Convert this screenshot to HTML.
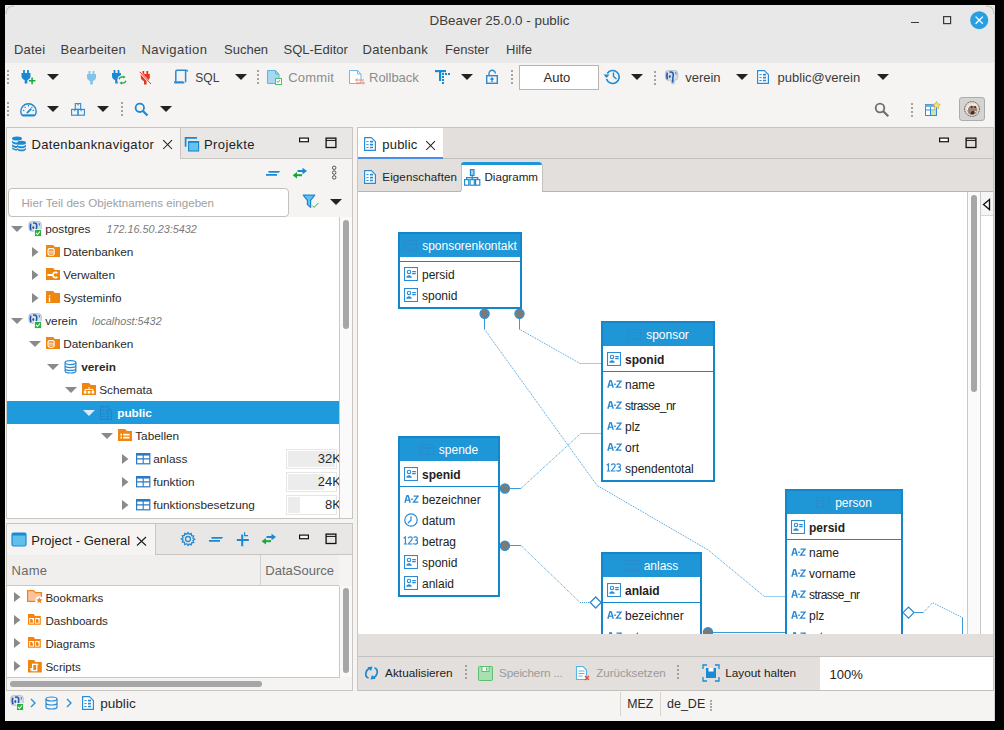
<!DOCTYPE html>
<html><head><meta charset="utf-8"><style>
html,body{margin:0;padding:0;width:1004px;height:730px;overflow:hidden;background:#000;}
body{position:relative;font-family:"Liberation Sans", sans-serif;}
body>div,body>svg,#cv>div,#cv>svg{position:absolute;}
</style></head><body>
<div style="left:0px;top:0px;width:1004px;height:730px;background:#000;"></div>
<div style="left:5px;top:5px;width:990px;height:716px;background:#f5f4f2;"></div>
<div style="left:5px;top:5px;width:990px;height:58px;background:#e8e8e8;"></div>
<svg style="left:5px;top:5px;" width="990" height="20" viewBox="0 0 990 20"><path d="M1 9 Q1 1 9 1" stroke="#bdbdbd" fill="none"/><path d="M981 1 Q989 1 989 9" stroke="#bdbdbd" fill="none"/></svg>
<div style="left:429.5px;top:14.00px;font-size:13.4px;line-height:13.4px;color:#3c3c3c;white-space:nowrap;">DBeaver 25.0.0 - public</div>
<div style="left:911px;top:21.5px;width:8px;height:1.2px;background:#3a3a3a;"></div>
<svg style="left:942px;top:15px;" width="10" height="10" viewBox="0 0 10 10"><rect x="1.6" y="1.6" width="7" height="7" fill="none" stroke="#3a3a3a" stroke-width="1.2"/></svg>
<svg style="left:970px;top:10.5px;" width="19" height="19" viewBox="0 0 19 19"><circle cx="9.2" cy="9.2" r="9" fill="#2a9fe0"/><path d="M5.6 5.6L12.8 12.8M12.8 5.6L5.6 12.8" stroke="#fff" stroke-width="1.3"/></svg>
<div style="left:14px;top:43.00px;font-size:13px;line-height:13px;color:#3c3c3c;white-space:nowrap;letter-spacing:0.2px">Datei</div>
<div style="left:60.5px;top:43.00px;font-size:13px;line-height:13px;color:#3c3c3c;white-space:nowrap;letter-spacing:0.25px">Bearbeiten</div>
<div style="left:141.5px;top:43.00px;font-size:13px;line-height:13px;color:#3c3c3c;white-space:nowrap;letter-spacing:0.45px">Navigation</div>
<div style="left:224px;top:43.00px;font-size:13px;line-height:13px;color:#3c3c3c;white-space:nowrap;letter-spacing:0px">Suchen</div>
<div style="left:283.5px;top:43.00px;font-size:13px;line-height:13px;color:#3c3c3c;white-space:nowrap;letter-spacing:0px">SQL-Editor</div>
<div style="left:362.5px;top:43.00px;font-size:13px;line-height:13px;color:#3c3c3c;white-space:nowrap;letter-spacing:0.3px">Datenbank</div>
<div style="left:445px;top:43.00px;font-size:13px;line-height:13px;color:#3c3c3c;white-space:nowrap;letter-spacing:0px">Fenster</div>
<div style="left:506px;top:43.00px;font-size:13px;line-height:13px;color:#3c3c3c;white-space:nowrap;letter-spacing:0px">Hilfe</div>
<div style="left:994px;top:12px;width:1px;height:709px;background:#d2d2d2;"></div>
<svg style="left:7px;top:70px;" width="2" height="18" viewBox="0 0 2 18"><rect x="0" y="0.0" width="2" height="2" fill="#aaa294"/><rect x="0" y="4.0" width="2" height="2" fill="#aaa294"/><rect x="0" y="8.0" width="2" height="2" fill="#aaa294"/><rect x="0" y="12.0" width="2" height="2" fill="#aaa294"/></svg>
<svg style="left:20.5px;top:70px;" width="18" height="15" viewBox="0 0 18 15"><g transform="translate(0.5,0)"><path d="M1.6 0H3.4V3H5.6V0H7.4V3H9V6.6Q9 8.6 7 9.6L5.8 10.2V13.6H3.2V10.2L2 9.6Q0 8.6 0 6.6V3H1.6Z" fill="#1a88d2"/></g><path d="M7.5 10.8h7M11 7.2v7.2" stroke="#f5f4f2" stroke-width="3"/><path d="M7.8 10.8h6.6M11.1 7.4v6.8" stroke="#18a838" stroke-width="1.5"/></svg>
<svg style="left:47px;top:74px;" width="12" height="6" viewBox="0 0 12 6"><path d="M0 0H12L6.0 6Z" fill="#222"/></svg>
<svg style="left:87px;top:70.5px;" width="10" height="14" viewBox="0 0 10 14"><path d="M1.6 0H3.4V3H5.6V0H7.4V3H9V6.6Q9 8.6 7 9.6L5.8 10.2V13.6H3.2V10.2L2 9.6Q0 8.6 0 6.6V3H1.6Z" fill="#80c4ea"/></svg>
<svg style="left:112px;top:70px;" width="16" height="15" viewBox="0 0 16 15"><path d="M1.6 0H3.4V3H5.6V0H7.4V3H9V6.6Q9 8.6 7 9.6L5.8 10.2V13.6H3.2V10.2L2 9.6Q0 8.6 0 6.6V3H1.6Z" fill="#1a88d2"/><circle cx="10.5" cy="10" r="5.2" fill="#f5f4f2"/><path d="M7 9.2c.6-1.8 2.2-2.6 4.4-2.2M14 10.8c-.6 1.8-2.2 2.6-4.4 2.2" stroke="#18a838" stroke-width="1.3" fill="none"/><path d="M11 5.4l2.6 1.6-2.4 1.6zM10 14.6L7.4 13l2.4-1.6z" fill="#18a838"/></svg>
<svg style="left:138.5px;top:70.5px;" width="13" height="14" viewBox="0 0 13 14"><g transform="translate(1.8,0)"><path d="M1.6 0H3.4V3H5.6V0H7.4V3H9V6.6Q9 8.6 7 9.6L5.8 10.2V13.6H3.2V10.2L2 9.6Q0 8.6 0 6.6V3H1.6Z" fill="#e8341c"/></g><path d="M.6 .8L12 13.2" stroke="#f5f4f2" stroke-width="2.2"/><path d="M.8 .8L12 13" stroke="#e8341c" stroke-width="1"/></svg>
<svg style="left:173px;top:69px;" width="16" height="16" viewBox="0 0 16 16"><path d="M2.8 12.5V2.4Q2.8 1.2 4 1.2H13Q14.6 1.2 14.6 2.6" stroke="#2a8ad4" stroke-width="1.5" fill="none"/><path d="M12.6 1.8V13.2" stroke="#2a8ad4" stroke-width="1.5"/><path d="M1 12.2H10.2L11.6 13.8Q11.8 14.6 11 14.6H2.4Q1 14.6 1 13.2Z" fill="#2a8ad4"/></svg>
<div style="left:195.3px;top:72.00px;font-size:12px;line-height:12px;color:#3c3c3c;white-space:nowrap;">SQL</div>
<svg style="left:234.5px;top:74px;" width="12" height="6" viewBox="0 0 12 6"><path d="M0 0H12L6.0 6Z" fill="#222"/></svg>
<svg style="left:257px;top:70px;" width="2" height="18" viewBox="0 0 2 18"><rect x="0" y="0.0" width="2" height="2" fill="#aaa294"/><rect x="0" y="4.0" width="2" height="2" fill="#aaa294"/><rect x="0" y="8.0" width="2" height="2" fill="#aaa294"/><rect x="0" y="12.0" width="2" height="2" fill="#aaa294"/></svg>
<svg style="left:266px;top:69px;" width="17" height="16" viewBox="0 0 17 16"><path d="M1.5 1.5h8l3.5 3.5v9.5H1.5z" fill="#a8d8f0" stroke="#5ab4e4"/><path d="M9.5 1.5v3.5h3.5" fill="none" stroke="#5ab4e4"/><rect x="9.5" y="9.5" width="6" height="6" fill="#fff" stroke="#4cc070"/><path d="M11 12l1 1.5 2-2.5" stroke="#4cc070" fill="none"/></svg>
<div style="left:288.3px;top:71.00px;font-size:13px;line-height:13px;color:#8c8c8c;white-space:nowrap;letter-spacing:0.15px">Commit</div>
<svg style="left:348px;top:69px;" width="17" height="16" viewBox="0 0 17 16"><path d="M1.5 1.5h8l3.5 3.5v9.5H1.5z" fill="#fff" stroke="#6abce8"/><path d="M9.5 1.5v3.5h3.5" fill="none" stroke="#6abce8"/><path d="M8 11h8M8 14h8" stroke="#f08070" stroke-width="1.2"/><path d="M9 9.5l-1.5 1.5 1.5 1.5M15 12.5l1.5 1.5-1.5 1.5" stroke="#f08070" fill="none"/></svg>
<div style="left:369px;top:71.00px;font-size:13px;line-height:13px;color:#8c8c8c;white-space:nowrap;">Rollback</div>
<svg style="left:434px;top:69px;" width="18" height="17" viewBox="0 0 18 17"><rect x="1" y="1" width="11" height="2.2" fill="#1a8ad4"/><rect x="5" y="1" width="2.2" height="11" fill="#1a8ad4"/><g fill="#1a8ad4"><rect x="8" y="4" width="2" height="2"/><rect x="11" y="4" width="2" height="2"/><rect x="14" y="4" width="2" height="2"/><rect x="8" y="7" width="2" height="2"/><rect x="8" y="10" width="2" height="2"/><rect x="8" y="13" width="2" height="2"/></g></svg>
<svg style="left:461px;top:74px;" width="12" height="6" viewBox="0 0 12 6"><path d="M0 0H12L6.0 6Z" fill="#222"/></svg>
<svg style="left:485px;top:69px;" width="14" height="16" viewBox="0 0 14 16"><path d="M4 6V4.5a3.2 3.2 0 0 1 6.4 0" stroke="#2a8ad4" stroke-width="1.4" fill="none"/><rect x="1.7" y="6.7" width="10.6" height="7.6" fill="none" stroke="#2a8ad4" stroke-width="1.4"/><path d="M7 13V9M5.5 10.5L7 9l1.5 1.5" stroke="#2a8ad4" stroke-width="1.3" fill="none"/></svg>
<svg style="left:511px;top:70px;" width="2" height="18" viewBox="0 0 2 18"><rect x="0" y="0.0" width="2" height="2" fill="#aaa294"/><rect x="0" y="4.0" width="2" height="2" fill="#aaa294"/><rect x="0" y="8.0" width="2" height="2" fill="#aaa294"/><rect x="0" y="12.0" width="2" height="2" fill="#aaa294"/></svg>
<div style="left:519px;top:65px;width:80px;height:25px;background:#fff;box-sizing:border-box;border:1px solid #b8b4b0;"></div>
<div style="left:543.5px;top:71.00px;font-size:13px;line-height:13px;color:#2a2a2a;white-space:nowrap;">Auto</div>
<svg style="left:603px;top:68px;" width="18" height="17" viewBox="0 0 18 17"><path d="M4.2 5.5A6.5 6.5 0 1 1 3.5 11" stroke="#1a8ad4" stroke-width="1.6" fill="none"/><path d="M0.5 6.5h6l-3 3.5z" fill="#1a8ad4"/><path d="M10.5 4.5v4l3 2.5" stroke="#1a8ad4" stroke-width="1.4" fill="none"/></svg>
<svg style="left:631px;top:74px;" width="12" height="6" viewBox="0 0 12 6"><path d="M0 0H12L6.0 6Z" fill="#222"/></svg>
<svg style="left:654px;top:71px;" width="2" height="18" viewBox="0 0 2 18"><rect x="0" y="0.0" width="2" height="2" fill="#aaa294"/><rect x="0" y="4.0" width="2" height="2" fill="#aaa294"/><rect x="0" y="8.0" width="2" height="2" fill="#aaa294"/><rect x="0" y="12.0" width="2" height="2" fill="#aaa294"/></svg>
<svg style="left:664px;top:70px;" width="15" height="15" viewBox="0 0 15 15"><path d="M1.4 3.2Q1.2 .6 4 .6H11Q13.8 .6 13.8 3.4V7.4Q13.8 9.8 11.6 10H10.4V12.6Q10.4 14 9 14Q7.4 14 7.4 12.6V10.2H3.6Q1.6 10 1.4 7.6Z" fill="#d6dee8" stroke="#aab2bc" stroke-width=".7"/><path d="M3.2 2.6Q2.4 5.8 3.4 9.2" stroke="#1c50a8" stroke-width="1.6" fill="none"/><ellipse cx="5.8" cy="6.6" rx=".9" ry="1.3" fill="#1c46a0"/><path d="M5.6 2.2Q8.6 1.4 9.2 3.8Q9.4 6 8.8 8.4L8.6 12.6" stroke="#1c5ab0" stroke-width="1.5" fill="none"/><path d="M11.2 2.2Q12.6 3 11.8 4.6" stroke="#3a8ac8" stroke-width="1.1" fill="none"/></svg>
<div style="left:685.2px;top:71.00px;font-size:13px;line-height:13px;color:#3c3c3c;white-space:nowrap;">verein</div>
<svg style="left:736.3px;top:74px;" width="12" height="6" viewBox="0 0 12 6"><path d="M0 0H12L6.0 6Z" fill="#222"/></svg>
<svg style="left:755.5px;top:69px;" width="14" height="16" viewBox="0 0 14 16"><path d="M1.6 1.6H8.4L12.4 5.6V14.4H1.6Z" fill="#fff" stroke="#2a8ad4" stroke-width="1.2" stroke-linejoin="round"/><path d="M3.4 5.6h2.2M3.4 8.6h2.2M3.4 11.5h2.2" stroke="#2a8ad4" stroke-width="1"/><path d="M7 5.6h3.1M7 8.6h3.1M7 11.5h3.1" stroke="#2a8ad4" stroke-width="1.7"/></svg>
<div style="left:777.6px;top:71.00px;font-size:13px;line-height:13px;color:#3c3c3c;white-space:nowrap;">public@verein</div>
<svg style="left:877.3px;top:74px;" width="12" height="6" viewBox="0 0 12 6"><path d="M0 0H12L6.0 6Z" fill="#222"/></svg>
<svg style="left:7px;top:102px;" width="2" height="18" viewBox="0 0 2 18"><rect x="0" y="0.0" width="2" height="2" fill="#aaa294"/><rect x="0" y="4.0" width="2" height="2" fill="#aaa294"/><rect x="0" y="8.0" width="2" height="2" fill="#aaa294"/><rect x="0" y="12.0" width="2" height="2" fill="#aaa294"/></svg>
<svg style="left:19.5px;top:102.5px;" width="17" height="14" viewBox="0 0 17 14"><path d="M2.2 12.2Q.8 10.8 .8 8.4A7.7 7.7 0 0 1 16.2 8.4Q16.2 10.8 14.8 12.2Z" fill="none" stroke="#1a88d2" stroke-width="1.4" stroke-linejoin="round"/><path d="M2.6 12.6H14.4" stroke="#1a88d2" stroke-width="1.8"/><path d="M8.5 1.8V3.4M3 7.2L4.4 7.6M14 7.2L12.6 7.6M4.6 3.8l1 1M12.4 3.8l-1 1" stroke="#1a88d2" stroke-width="1.1"/><path d="M7.4 9.6L10.8 6.2" stroke="#1a88d2" stroke-width="1.8" stroke-linecap="round"/></svg>
<svg style="left:47px;top:105.5px;" width="12" height="6" viewBox="0 0 12 6"><path d="M0 0H12L6.0 6Z" fill="#222"/></svg>
<svg style="left:70.5px;top:102.5px;" width="14" height="13" viewBox="0 0 14 13"><g fill="none" stroke="#2a8ad4" stroke-width="1.1"><rect x="4.3" y=".6" width="5.4" height="5.8"/><rect x=".6" y="6.4" width="6.4" height="5.8"/><rect x="7" y="6.4" width="6.4" height="5.8"/></g><path d="M7 .6V2.6M3.8 6.4V8.2M10.2 6.4V8.2" stroke="#2a8ad4" stroke-width="1.1"/></svg>
<svg style="left:97px;top:105.5px;" width="12" height="6" viewBox="0 0 12 6"><path d="M0 0H12L6.0 6Z" fill="#222"/></svg>
<svg style="left:120.5px;top:102px;" width="2" height="18" viewBox="0 0 2 18"><rect x="0" y="0.0" width="2" height="2" fill="#aaa294"/><rect x="0" y="4.0" width="2" height="2" fill="#aaa294"/><rect x="0" y="8.0" width="2" height="2" fill="#aaa294"/><rect x="0" y="12.0" width="2" height="2" fill="#aaa294"/></svg>
<svg style="left:134px;top:102px;" width="15" height="15" viewBox="0 0 15 15"><circle cx="5.8" cy="5.8" r="4.2" fill="none" stroke="#1a8ad4" stroke-width="1.8"/><path d="M9 9l4.5 4.5" stroke="#1a8ad4" stroke-width="2.2"/></svg>
<svg style="left:160px;top:105.5px;" width="12" height="6" viewBox="0 0 12 6"><path d="M0 0H12L6.0 6Z" fill="#222"/></svg>
<svg style="left:874px;top:102px;" width="16" height="16" viewBox="0 0 16 16"><circle cx="6" cy="6" r="4.3" fill="none" stroke="#6e6e6e" stroke-width="1.8"/><path d="M9.3 9.3l5 5" stroke="#6e6e6e" stroke-width="2.2"/></svg>
<svg style="left:911px;top:103px;" width="2" height="18" viewBox="0 0 2 18"><rect x="0" y="0.0" width="2" height="2" fill="#aaa294"/><rect x="0" y="4.0" width="2" height="2" fill="#aaa294"/><rect x="0" y="8.0" width="2" height="2" fill="#aaa294"/><rect x="0" y="12.0" width="2" height="2" fill="#aaa294"/></svg>
<svg style="left:924px;top:101px;" width="17" height="16" viewBox="0 0 17 16"><rect x="1.5" y="3.5" width="11" height="11" fill="#fff" stroke="#3a8ad0"/><rect x="1.5" y="3.5" width="11" height="2.5" fill="#6ab0e0"/><path d="M1.5 9h11M6.5 6v8.5" stroke="#3a8ad0"/><rect x="7" y="9.5" width="5" height="4.5" fill="#c8e6b0"/><path d="M12.5 0.5l1.2 2.5 2.6.3-2 1.8.6 2.6-2.4-1.4-2.4 1.4.6-2.6-2-1.8 2.6-.3z" fill="#f8e08a" stroke="#c89a20" stroke-width=".6"/></svg>
<div style="left:959px;top:97px;width:26px;height:23.5px;background:#d4d4d4;box-sizing:border-box;border:1px solid #acacac;border-radius:3px;"></div>
<svg style="left:963px;top:100px;" width="18" height="18" viewBox="0 0 18 18"><circle cx="9" cy="9" r="7.4" fill="#e6dccf" stroke="#4e3e34" stroke-width=".9" stroke-dasharray="1.2 .6"/><path d="M4.5 10.5C4.8 7 6.5 5.6 9.5 5.4c2.6-.2 4.6 1.4 4.8 4.2.2 2.6-1.6 5.2-4.8 5.4-2.8.2-4.8-1.6-5-4.5z" fill="#9c8272"/><path d="M7.5 13.5c.5-1.6 1.6-2.6 3-2.8l1 2.6c-1 1-2.6 1.4-4 .2z" fill="#3e2c22"/><path d="M4.2 10c.4-2.6 1.6-4.4 3.6-5.2" stroke="#fff" stroke-width="1" fill="none"/><path d="M8.6 5.2c1.6-.6 3.2-.6 4.6 0" stroke="#fff" stroke-width=".9" fill="none"/><circle cx="8.6" cy="6.9" r=".9" fill="#2a1e18"/><circle cx="12.2" cy="7.1" r=".9" fill="#2a1e18"/><circle cx="12.8" cy="11.6" r=".7" fill="#fff"/></svg>
<div style="left:6px;top:127px;width:347px;height:392px;background:#f5f4f2;"></div>
<div style="left:6px;top:127px;width:347px;height:1px;background:#c9c5c1;"></div>
<div style="left:6px;top:127px;width:1px;height:392px;background:#c9c5c1;"></div>
<div style="left:352px;top:127px;width:1px;height:392px;background:#c9c5c1;"></div>
<div style="left:6px;top:518px;width:347px;height:1px;background:#c9c5c1;"></div>
<div style="left:180px;top:128px;width:172px;height:30px;background:#e8e7e5;"></div>
<div style="left:180px;top:158px;width:172px;height:1px;background:#c9c5c1;"></div>
<div style="left:180px;top:128px;width:1px;height:30px;background:#c9c5c1;"></div>
<svg style="left:11px;top:136px;" width="16" height="16" viewBox="0 0 16 16"><g fill="#1a8ad4"><ellipse cx="6" cy="2.5" rx="5" ry="2"/><path d="M1 4.5c1 1.5 3 2 5 2s2.5 0 3-.5v2c-.5.5-1.5.5-3 .5-2 0-4-.5-5-2zM1 8c1 1.5 3 2 5 2v2c-2 0-4-.5-5-2zM1 11c1 1.5 3 2 5 2v1.5c-2 0-4-.5-5-2z"/><ellipse cx="10.5" cy="6.8" rx="4.5" ry="2"/><path d="M6 8.5c1 1.3 2.5 1.8 4.5 1.8s3.5-.5 4.5-1.8v2c-1 1.3-2.5 1.8-4.5 1.8S7 11.8 6 10.5zM6 11.8c1 1.3 2.5 1.8 4.5 1.8s3.5-.5 4.5-1.8v1.7c-1 1.3-2.5 1.8-4.5 1.8S7 14.8 6 13.5z"/></g></svg>
<div style="left:31.5px;top:138.00px;font-size:13px;line-height:13px;color:#222;white-space:nowrap;letter-spacing:0.35px">Datenbanknavigator</div>
<svg style="left:162px;top:139px;" width="12" height="11" viewBox="0 0 12 11"><path d="M1.2 1.2L10 10M10 1.2L1.2 10" stroke="#1a1a1a" stroke-width="1.05"/></svg>
<svg style="left:184px;top:136px;" width="16" height="16" viewBox="0 0 16 16"><path d="M1.6 10.8V1.8H13" stroke="#1a88d2" stroke-width="1.7" fill="none"/><rect x="4.6" y="5.6" width="10" height="9.4" fill="#62c4ec" stroke="#1a88d2" stroke-width="1.1"/><path d="M4.1 5.9H15.1" stroke="#1a88d2" stroke-width="1.8"/></svg>
<div style="left:204px;top:138.00px;font-size:13px;line-height:13px;color:#222;white-space:nowrap;letter-spacing:0.4px">Projekte</div>
<svg style="left:298px;top:137px;" width="12" height="6" viewBox="0 0 12 6"><rect x="1.6" y="1.1" width="8.8" height="3.6" fill="#fff" stroke="#111" stroke-width="1.2"/></svg>
<svg style="left:325px;top:137px;" width="12" height="12" viewBox="0 0 12 12"><rect x="1.1" y="1.1" width="9.8" height="9.4" fill="none" stroke="#111" stroke-width="1.3"/><path d="M1 3.4h10" stroke="#111" stroke-width="1"/></svg>
<svg style="left:265px;top:169px;" width="15" height="8" viewBox="0 0 15 8"><path d="M3.5 2.8H13.2Q14 2.8 14 2M1 5.8H12" stroke="#1a88d2" stroke-width="1.8" fill="none"/></svg>
<svg style="left:291.5px;top:166.5px;" width="16" height="12" viewBox="0 0 16 12"><path d="M5.5 4H11" stroke="#1a88d2" stroke-width="2"/><path d="M10.5 .8L15 4L10.5 7.2Z" fill="#1a88d2"/><path d="M10 8.2H4.5" stroke="#18a838" stroke-width="2"/><path d="M5 5L.6 8.2L5 11.4Z" fill="#18a838"/></svg>
<svg style="left:330px;top:165px;" width="8" height="16" viewBox="0 0 8 16"><g fill="none" stroke="#4a4a4a" stroke-width=".95"><circle cx="4.2" cy="2.8" r="1.75"/><circle cx="4.2" cy="7.6" r="1.75"/><circle cx="4.2" cy="12.4" r="1.75"/></g></svg>
<div style="left:7.5px;top:188px;width:281px;height:28.5px;background:#fff;box-sizing:border-box;border:1px solid #c4c0bc;border-radius:4px;"></div>
<div style="left:21.5px;top:197.00px;font-size:11.6px;line-height:11.6px;color:#a0a0a0;white-space:nowrap;">Hier Teil des Objektnamens eingeben</div>
<svg style="left:302px;top:194px;" width="18" height="15" viewBox="0 0 18 15"><path d="M1.2 1.2H12.8L8.6 6.4V13.4L5.4 10.6V6.4Z" fill="#62c0f0" stroke="#1a88d2" stroke-width="1.2" stroke-linejoin="round"/><path d="M10.4 11.6l1.8 1.8 4.2-4.4" stroke="#2ab040" stroke-width="1" fill="none"/></svg>
<svg style="left:330.3px;top:198.6px;" width="12" height="6" viewBox="0 0 12 6"><path d="M0 0H12L6.0 6Z" fill="#222"/></svg>
<div style="left:7px;top:217px;width:332px;height:301px;background:#fff;"></div>
<svg style="left:11px;top:226px;" width="12" height="6" viewBox="0 0 12 6"><path d="M0 0H12L6 6Z" fill="#8a8a8a"/></svg>
<svg style="left:27px;top:221px;" width="16" height="16" viewBox="0 0 16 16"><g transform="translate(0.5,0)"><path d="M1.4 3.2Q1.2 .6 4 .6H11Q13.8 .6 13.8 3.4V7.4Q13.8 9.8 11.6 10H10.4V12.6Q10.4 14 9 14Q7.4 14 7.4 12.6V10.2H3.6Q1.6 10 1.4 7.6Z" fill="#d6dee8" stroke="#aab2bc" stroke-width=".7"/><path d="M3.2 2.6Q2.4 5.8 3.4 9.2" stroke="#1c50a8" stroke-width="1.6" fill="none"/><ellipse cx="5.8" cy="6.6" rx=".9" ry="1.3" fill="#1c46a0"/><path d="M5.6 2.2Q8.6 1.4 9.2 3.8Q9.4 6 8.8 8.4L8.6 12.6" stroke="#1c5ab0" stroke-width="1.5" fill="none"/><path d="M11.2 2.2Q12.6 3 11.8 4.6" stroke="#3a8ac8" stroke-width="1.1" fill="none"/></g><rect x="7.5" y="8.5" width="7" height="7" fill="#2ab040" stroke="#fff" stroke-width=".8"/><path d="M9 12l1.5 1.5 2.5-3" stroke="#fff" stroke-width="1.1" fill="none"/></svg>
<div style="left:45.2px;top:224.00px;font-size:11.8px;line-height:11.8px;color:#2a2a2a;white-space:nowrap;">postgres</div>
<div style="left:106.6px;top:224.00px;font-size:10.8px;line-height:10.8px;color:#7a7a7a;white-space:nowrap;font-style:italic;">172.16.50.23:5432</div>
<svg style="left:32px;top:247px;" width="7" height="10" viewBox="0 0 7 10"><path d="M0 0L6.5 5L0 10Z" fill="#8a8a8a"/></svg>
<svg style="left:45.8px;top:245px;" width="14" height="12" viewBox="0 0 14 12"><path d="M0 0H7L9 2H14V12H0Z" fill="#ee8612"/><rect x="2" y="3.6" width="6.2" height="6.6" rx="1.6" fill="none" stroke="#fff" stroke-width="1.1"/><path d="M2.5 6.2h5.2M2.5 8h5.2" stroke="#fff" stroke-width=".9"/></svg>
<div style="left:63.2px;top:247.00px;font-size:11.8px;line-height:11.8px;color:#2a2a2a;white-space:nowrap;">Datenbanken</div>
<svg style="left:32px;top:270px;" width="7" height="10" viewBox="0 0 7 10"><path d="M0 0L6.5 5L0 10Z" fill="#8a8a8a"/></svg>
<svg style="left:45.8px;top:268px;" width="14" height="12" viewBox="0 0 14 12"><path d="M0 0H7L9 2H14V12H0Z" fill="#ee8612"/><path d="M1.5 7H7.5" stroke="#fff" stroke-width="2"/><path d="M11.3 5.2A2.6 2.6 0 1 0 11.3 8.8" stroke="#fff" stroke-width="1.8" fill="none"/></svg>
<div style="left:63.2px;top:270.00px;font-size:11.8px;line-height:11.8px;color:#2a2a2a;white-space:nowrap;">Verwalten</div>
<svg style="left:32px;top:293px;" width="7" height="10" viewBox="0 0 7 10"><path d="M0 0L6.5 5L0 10Z" fill="#8a8a8a"/></svg>
<svg style="left:45.8px;top:291px;" width="14" height="12" viewBox="0 0 14 12"><path d="M0 0H7L9 2H14V12H0Z" fill="#ee8612"/><path d="M3.5 6.5v4.5M3.5 4.2v1.2" stroke="#fff" stroke-width="1.4"/></svg>
<div style="left:63.2px;top:293.00px;font-size:11.8px;line-height:11.8px;color:#2a2a2a;white-space:nowrap;">Systeminfo</div>
<svg style="left:11px;top:318px;" width="12" height="6" viewBox="0 0 12 6"><path d="M0 0H12L6 6Z" fill="#8a8a8a"/></svg>
<svg style="left:27px;top:313px;" width="16" height="16" viewBox="0 0 16 16"><g transform="translate(0.5,0)"><path d="M1.4 3.2Q1.2 .6 4 .6H11Q13.8 .6 13.8 3.4V7.4Q13.8 9.8 11.6 10H10.4V12.6Q10.4 14 9 14Q7.4 14 7.4 12.6V10.2H3.6Q1.6 10 1.4 7.6Z" fill="#d6dee8" stroke="#aab2bc" stroke-width=".7"/><path d="M3.2 2.6Q2.4 5.8 3.4 9.2" stroke="#1c50a8" stroke-width="1.6" fill="none"/><ellipse cx="5.8" cy="6.6" rx=".9" ry="1.3" fill="#1c46a0"/><path d="M5.6 2.2Q8.6 1.4 9.2 3.8Q9.4 6 8.8 8.4L8.6 12.6" stroke="#1c5ab0" stroke-width="1.5" fill="none"/><path d="M11.2 2.2Q12.6 3 11.8 4.6" stroke="#3a8ac8" stroke-width="1.1" fill="none"/></g><rect x="7.5" y="8.5" width="7" height="7" fill="#2ab040" stroke="#fff" stroke-width=".8"/><path d="M9 12l1.5 1.5 2.5-3" stroke="#fff" stroke-width="1.1" fill="none"/></svg>
<div style="left:45.2px;top:316.00px;font-size:11.8px;line-height:11.8px;color:#2a2a2a;white-space:nowrap;">verein</div>
<div style="left:92px;top:316.00px;font-size:10.8px;line-height:10.8px;color:#7a7a7a;white-space:nowrap;font-style:italic;">localhost:5432</div>
<svg style="left:29px;top:341px;" width="12" height="6" viewBox="0 0 12 6"><path d="M0 0H12L6 6Z" fill="#8a8a8a"/></svg>
<svg style="left:45.8px;top:337px;" width="14" height="12" viewBox="0 0 14 12"><path d="M0 0H7L9 2H14V12H0Z" fill="#ee8612"/><rect x="2" y="3.6" width="6.2" height="6.6" rx="1.6" fill="none" stroke="#fff" stroke-width="1.1"/><path d="M2.5 6.2h5.2M2.5 8h5.2" stroke="#fff" stroke-width=".9"/></svg>
<div style="left:63.2px;top:339.00px;font-size:11.8px;line-height:11.8px;color:#2a2a2a;white-space:nowrap;">Datenbanken</div>
<svg style="left:47px;top:364px;" width="12" height="6" viewBox="0 0 12 6"><path d="M0 0H12L6 6Z" fill="#8a8a8a"/></svg>
<svg style="left:64px;top:360px;" width="14" height="14" viewBox="0 0 14 14"><g fill="none" stroke="#2a8ad4" stroke-width="1.2"><ellipse cx="6.5" cy="2.6" rx="5.4" ry="2"/><path d="M1.1 2.6v8.4c0 1.1 2.4 2 5.4 2s5.4-.9 5.4-2V2.6M1.1 5.6c0 1.1 2.4 2 5.4 2s5.4-.9 5.4-2M1.1 8.4c0 1.1 2.4 2 5.4 2s5.4-.9 5.4-2"/></g></svg>
<div style="left:81.2px;top:362.00px;font-size:11.8px;line-height:11.8px;color:#2a2a2a;white-space:nowrap;font-weight:bold;">verein</div>
<svg style="left:65px;top:387px;" width="12" height="6" viewBox="0 0 12 6"><path d="M0 0H12L6 6Z" fill="#8a8a8a"/></svg>
<svg style="left:81.8px;top:383px;" width="14" height="12" viewBox="0 0 14 12"><path d="M0 0H7L9 2H14V12H0Z" fill="#ee8612"/><path d="M3 8.5v-2h8v2M7 4v2.5" stroke="#fff" fill="none" stroke-width="1"/><rect x="1.8" y="8" width="2.6" height="2.6" fill="#fff"/><rect x="5.7" y="8" width="2.6" height="2.6" fill="#fff"/><rect x="9.6" y="8" width="2.6" height="2.6" fill="#fff"/></svg>
<div style="left:99.2px;top:385.00px;font-size:11.8px;line-height:11.8px;color:#2a2a2a;white-space:nowrap;">Schemata</div>
<div style="left:7px;top:401px;width:332px;height:23px;background:#1f9bdd;"></div>
<svg style="left:83px;top:410px;" width="12" height="6" viewBox="0 0 12 6"><path d="M0 0H12L6 6Z" fill="#d8ecf8"/></svg>
<svg style="left:99px;top:405px;opacity:.7" width="14" height="16" viewBox="0 0 14 16"><path d="M1.6 1.6H8.4L12.4 5.6V14.4H1.6Z" fill="none" stroke="#2a7cc0" stroke-width="1.2" stroke-linejoin="round"/><path d="M3.4 5.6h2.2M3.4 8.6h2.2M3.4 11.5h2.2" stroke="#2a7cc0" stroke-width="1"/><path d="M7 5.6h3.1M7 8.6h3.1M7 11.5h3.1" stroke="#2a7cc0" stroke-width="1.7"/></svg>
<div style="left:117.2px;top:408.00px;font-size:11.8px;line-height:11.8px;color:#fff;white-space:nowrap;font-weight:bold;">public</div>
<svg style="left:101px;top:433px;" width="12" height="6" viewBox="0 0 12 6"><path d="M0 0H12L6 6Z" fill="#8a8a8a"/></svg>
<svg style="left:117.8px;top:429px;" width="14" height="12" viewBox="0 0 14 12"><path d="M0 0H7L9 2H14V12H0Z" fill="#ee8612"/><path d="M2.4 5.6h1.6M2.4 8.6h1.6" stroke="#fff" stroke-width="1.6"/><path d="M5.2 5.6h6.4M5.2 8.6h6.4" stroke="#fff" stroke-width="1.6"/></svg>
<div style="left:135.2px;top:431.00px;font-size:11.8px;line-height:11.8px;color:#2a2a2a;white-space:nowrap;">Tabellen</div>
<svg style="left:122px;top:454px;" width="7" height="10" viewBox="0 0 7 10"><path d="M0 0L6.5 5L0 10Z" fill="#8a8a8a"/></svg>
<svg style="left:136px;top:453px;" width="15" height="12" viewBox="0 0 15 12"><rect x=".6" y=".6" width="13.2" height="10.2" fill="#fff" stroke="#2a7ac4" stroke-width="1.2"/><path d="M.6 1.6h13.2" stroke="#2a7ac4" stroke-width="2"/><path d="M.6 5.9h13.2M7.2 1v9.8" stroke="#2a7ac4" stroke-width="1.1"/></svg>
<div style="left:153.2px;top:454.00px;font-size:11.8px;line-height:11.8px;color:#2a2a2a;white-space:nowrap;">anlass</div>
<div style="left:286px;top:449px;width:51px;height:20px;background:#fff;box-sizing:border-box;border:1px solid #e6e6e6;"></div>
<div style="left:288px;top:451px;width:47px;height:16px;background:#ececec;"></div>
<div style="left:280px;top:452.00px;font-size:13px;line-height:13px;color:#2a2a2a;white-space:nowrap;width:61px;text-align:right;">32K</div>
<svg style="left:122px;top:477px;" width="7" height="10" viewBox="0 0 7 10"><path d="M0 0L6.5 5L0 10Z" fill="#8a8a8a"/></svg>
<svg style="left:136px;top:476px;" width="15" height="12" viewBox="0 0 15 12"><rect x=".6" y=".6" width="13.2" height="10.2" fill="#fff" stroke="#2a7ac4" stroke-width="1.2"/><path d="M.6 1.6h13.2" stroke="#2a7ac4" stroke-width="2"/><path d="M.6 5.9h13.2M7.2 1v9.8" stroke="#2a7ac4" stroke-width="1.1"/></svg>
<div style="left:153.2px;top:477.00px;font-size:11.8px;line-height:11.8px;color:#2a2a2a;white-space:nowrap;">funktion</div>
<div style="left:286px;top:472px;width:51px;height:20px;background:#fff;box-sizing:border-box;border:1px solid #e6e6e6;"></div>
<div style="left:288px;top:474px;width:36px;height:16px;background:#ececec;"></div>
<div style="left:280px;top:475.00px;font-size:13px;line-height:13px;color:#2a2a2a;white-space:nowrap;width:61px;text-align:right;">24K</div>
<svg style="left:122px;top:500px;" width="7" height="10" viewBox="0 0 7 10"><path d="M0 0L6.5 5L0 10Z" fill="#8a8a8a"/></svg>
<svg style="left:136px;top:499px;" width="15" height="12" viewBox="0 0 15 12"><rect x=".6" y=".6" width="13.2" height="10.2" fill="#fff" stroke="#2a7ac4" stroke-width="1.2"/><path d="M.6 1.6h13.2" stroke="#2a7ac4" stroke-width="2"/><path d="M.6 5.9h13.2M7.2 1v9.8" stroke="#2a7ac4" stroke-width="1.1"/></svg>
<div style="left:153.2px;top:500.00px;font-size:11.8px;line-height:11.8px;color:#2a2a2a;white-space:nowrap;">funktionsbesetzung</div>
<div style="left:286px;top:495px;width:51px;height:20px;background:#fff;box-sizing:border-box;border:1px solid #e6e6e6;"></div>
<div style="left:288px;top:497px;width:12px;height:16px;background:#ececec;"></div>
<div style="left:280px;top:498.00px;font-size:13px;line-height:13px;color:#2a2a2a;white-space:nowrap;width:61px;text-align:right;">8K</div>
<div style="left:339px;top:217px;width:1px;height:301px;background:#c8c8c8;"></div>
<div style="left:340px;top:217px;width:12px;height:301px;background:#fafafa;"></div>
<div style="left:343px;top:220px;width:6px;height:108.5px;background:#a6a6a6;border-radius:3px;"></div>
<div style="left:6px;top:523px;width:347px;height:168px;background:#f5f4f2;"></div>
<div style="left:6px;top:523px;width:347px;height:1px;background:#c9c5c1;"></div>
<div style="left:6px;top:523px;width:1px;height:168px;background:#c9c5c1;"></div>
<div style="left:352px;top:523px;width:1px;height:168px;background:#c9c5c1;"></div>
<div style="left:6px;top:690px;width:347px;height:1px;background:#c9c5c1;"></div>
<div style="left:155px;top:524px;width:197px;height:31px;background:#e8e7e5;"></div>
<div style="left:155px;top:554px;width:197px;height:1px;background:#c9c5c1;"></div>
<div style="left:155px;top:524px;width:1px;height:31px;background:#c9c5c1;"></div>
<svg style="left:11px;top:532px;" width="16" height="15" viewBox="0 0 16 15"><rect x="1" y="1" width="14" height="13" rx="1.5" fill="#60c0ec" stroke="#1a8ad4" stroke-width="1.2"/><rect x="1" y="1" width="14" height="2.5" fill="#1a8ad4"/></svg>
<div style="left:31.2px;top:534.00px;font-size:13px;line-height:13px;color:#222;white-space:nowrap;letter-spacing:0.05px">Project - General</div>
<svg style="left:136px;top:536px;" width="11" height="10" viewBox="0 0 11 10"><path d="M1 1L10 9.5M10 1L1 9.5" stroke="#1a1a1a" stroke-width="1.05"/></svg>
<svg style="left:180px;top:531px;" width="16" height="16" viewBox="0 0 16 16"><g fill="none" stroke="#2a8ad4" stroke-width="1.3"><circle cx="8" cy="8" r="2.5"/><path d="M8 1.5l1.2 1.8 2-.8.4 2.1 2.1.4-.8 2 1.8 1.2-1.8 1.2.8 2-2.1.4-.4 2.1-2-.8L8 14.5l-1.2-1.8-2 .8-.4-2.1-2.1-.4.8-2L1.3 8l1.8-1.2-.8-2 2.1-.4.4-2.1 2 .8z"/></g></svg>
<svg style="left:208px;top:535px;" width="15" height="8" viewBox="0 0 15 8"><path d="M3.5 2.8H13.2Q14 2.8 14 2M1 5.8H12" stroke="#1a88d2" stroke-width="1.8" fill="none"/></svg>
<svg style="left:236px;top:531px;" width="14" height="16" viewBox="0 0 14 16"><path d="M.8 9h12M6.2 3.6v11.6" stroke="#1a88d2" stroke-width="2"/><path d="M8.6 1.2v3.4h3.4" stroke="#1a88d2" stroke-width="1.2" fill="none"/></svg>
<svg style="left:261px;top:533px;" width="16" height="12" viewBox="0 0 16 12"><path d="M5.5 4H11" stroke="#1a88d2" stroke-width="2"/><path d="M10.5 .8L15 4L10.5 7.2Z" fill="#1a88d2"/><path d="M10 8.2H4.5" stroke="#18a838" stroke-width="2"/><path d="M5 5L.6 8.2L5 11.4Z" fill="#18a838"/></svg>
<svg style="left:298px;top:534px;" width="12" height="6" viewBox="0 0 12 6"><rect x="1.6" y="1.1" width="8.8" height="3.6" fill="#fff" stroke="#111" stroke-width="1.2"/></svg>
<svg style="left:325px;top:533px;" width="12" height="12" viewBox="0 0 12 12"><rect x="1.1" y="1.1" width="9.8" height="9.4" fill="none" stroke="#111" stroke-width="1.3"/><path d="M1 3.4h10" stroke="#111" stroke-width="1"/></svg>
<div style="left:7px;top:555px;width:332px;height:30px;background:#f0efee;"></div>
<div style="left:260px;top:555px;width:1px;height:30px;background:#d0d0d0;"></div>
<div style="left:7px;top:585px;width:332px;height:1px;background:#c8c8c8;"></div>
<div style="left:11.5px;top:564.00px;font-size:13px;line-height:13px;color:#6a6a6a;white-space:nowrap;letter-spacing:0.3px">Name</div>
<div style="left:265.3px;top:564.00px;font-size:13px;line-height:13px;color:#6a6a6a;white-space:nowrap;">DataSource</div>
<div style="left:7px;top:586px;width:332px;height:91px;background:#fff;"></div>
<div style="left:339px;top:586px;width:1px;height:91px;background:#c8c8c8;"></div>
<div style="left:7px;top:677px;width:333px;height:1px;background:#c8c8c8;"></div>
<div style="left:340px;top:586px;width:12px;height:91px;background:#f8f8f8;"></div>
<div style="left:343px;top:588px;width:6px;height:85px;background:#a6a6a6;border-radius:3px;"></div>
<div style="left:10px;top:681px;width:252px;height:6px;background:#a6a6a6;border-radius:3px;"></div>
<svg style="left:14px;top:592px;" width="7" height="10" viewBox="0 0 7 10"><path d="M0 0L6.5 5L0 10Z" fill="#8a8a8a"/></svg>
<svg style="left:27px;top:590px;" width="17" height="14" viewBox="0 0 17 14"><path d="M.6 .6H6.6L8.6 2.6H14.4V11.4H.6Z" fill="#fcc49c" stroke="#f08418" stroke-width="1.2"/><circle cx="12.4" cy="10.4" r="4.2" fill="#fff"/><path d="M12.4 7.2l.95 2.1 2.25.2-1.7 1.5.5 2.2-2-1.15-2 1.15.5-2.2-1.7-1.5 2.25-.2z" fill="#f08418"/></svg>
<div style="left:45.4px;top:592.00px;font-size:11.6px;line-height:11.6px;color:#2a2a2a;white-space:nowrap;">Bookmarks</div>
<svg style="left:14px;top:615px;" width="7" height="10" viewBox="0 0 7 10"><path d="M0 0L6.5 5L0 10Z" fill="#8a8a8a"/></svg>
<svg style="left:28.1px;top:614px;" width="13" height="11" viewBox="0 0 13 11"><path d="M0 0H5.6L7.1 2H12.8V10.8H0Z" fill="#f7820f"/><rect x="1.2" y="4" width="4.8" height="5.6" fill="#fff"/><rect x="6.9" y="4" width="4.8" height="5.6" fill="#fff"/><path d="M2.1 5H3.7L4.9 6.2V8.7H2.1ZM7.8 5H9.4L10.6 6.2V8.7H7.8Z" fill="#f7820f"/></svg>
<div style="left:45.4px;top:615.00px;font-size:11.6px;line-height:11.6px;color:#2a2a2a;white-space:nowrap;">Dashboards</div>
<svg style="left:14px;top:638px;" width="7" height="10" viewBox="0 0 7 10"><path d="M0 0L6.5 5L0 10Z" fill="#8a8a8a"/></svg>
<svg style="left:28.1px;top:637px;" width="13" height="11" viewBox="0 0 13 11"><path d="M0 0H5.6L7.1 2H12.8V10.8H0Z" fill="#f7820f"/><rect x="1.2" y="4" width="4.8" height="5.6" fill="#fff"/><rect x="6.9" y="4" width="4.8" height="5.6" fill="#fff"/><path d="M2.1 5H3.7L4.9 6.2V8.7H2.1ZM7.8 5H9.4L10.6 6.2V8.7H7.8Z" fill="#f7820f"/></svg>
<div style="left:45.4px;top:638.00px;font-size:11.6px;line-height:11.6px;color:#2a2a2a;white-space:nowrap;">Diagrams</div>
<svg style="left:14px;top:661px;" width="7" height="10" viewBox="0 0 7 10"><path d="M0 0L6.5 5L0 10Z" fill="#8a8a8a"/></svg>
<svg style="left:28.1px;top:660px;" width="14" height="13" viewBox="0 0 14 13"><path d="M0 0H6L7.6 2H13.8V12.6H0Z" fill="#f08412"/><path d="M3.4 10.6H8.8V4.4H4.6V10.2M3 10.6V8.6H4.4" stroke="#fff" stroke-width="1.3" fill="none"/><path d="M4.4 4.4H10.2" stroke="#fff" stroke-width="1.1"/></svg>
<div style="left:45.4px;top:661.00px;font-size:11.6px;line-height:11.6px;color:#2a2a2a;white-space:nowrap;">Scripts</div>
<svg style="left:9px;top:695px;" width="16" height="16" viewBox="0 0 16 16"><g transform="translate(0.5,0)"><path d="M1.4 3.2Q1.2 .6 4 .6H11Q13.8 .6 13.8 3.4V7.4Q13.8 9.8 11.6 10H10.4V12.6Q10.4 14 9 14Q7.4 14 7.4 12.6V10.2H3.6Q1.6 10 1.4 7.6Z" fill="#d6dee8" stroke="#aab2bc" stroke-width=".7"/><path d="M3.2 2.6Q2.4 5.8 3.4 9.2" stroke="#1c50a8" stroke-width="1.6" fill="none"/><ellipse cx="5.8" cy="6.6" rx=".9" ry="1.3" fill="#1c46a0"/><path d="M5.6 2.2Q8.6 1.4 9.2 3.8Q9.4 6 8.8 8.4L8.6 12.6" stroke="#1c5ab0" stroke-width="1.5" fill="none"/><path d="M11.2 2.2Q12.6 3 11.8 4.6" stroke="#3a8ac8" stroke-width="1.1" fill="none"/></g><rect x="7.5" y="8.5" width="7" height="7" fill="#2ab040" stroke="#fff" stroke-width=".8"/><path d="M9 12l1.5 1.5 2.5-3" stroke="#fff" stroke-width="1.1" fill="none"/></svg>
<svg style="left:30px;top:698px;" width="7" height="10" viewBox="0 0 7 10"><path d="M1 1l4 4-4 4" stroke="#2a8ad4" stroke-width="1.3" fill="none"/></svg>
<svg style="left:45px;top:696px;" width="13" height="14" viewBox="0 0 13 14"><g fill="none" stroke="#2a8ad4" stroke-width="1.2"><ellipse cx="6.5" cy="3" rx="5.5" ry="2"/><path d="M1 3v8c0 1.1 2.5 2 5.5 2s5.5-.9 5.5-2V3M1 7c0 1.1 2.5 2 5.5 2s5.5-.9 5.5-2"/></g></svg>
<svg style="left:66px;top:698px;" width="7" height="10" viewBox="0 0 7 10"><path d="M1 1l4 4-4 4" stroke="#2a8ad4" stroke-width="1.3" fill="none"/></svg>
<svg style="left:80.5px;top:695px;" width="14" height="16" viewBox="0 0 14 16"><path d="M1.6 1.6H8.4L12.4 5.6V14.4H1.6Z" fill="#fff" stroke="#2a8ad4" stroke-width="1.2" stroke-linejoin="round"/><path d="M3.4 5.6h2.2M3.4 8.6h2.2M3.4 11.5h2.2" stroke="#2a8ad4" stroke-width="1"/><path d="M7 5.6h3.1M7 8.6h3.1M7 11.5h3.1" stroke="#2a8ad4" stroke-width="1.7"/></svg>
<div style="left:100.2px;top:697.00px;font-size:13.6px;line-height:13.6px;color:#2a2a2a;white-space:nowrap;">public</div>
<div style="left:620px;top:692px;width:1px;height:24px;background:#d8d4d0;"></div>
<div style="left:660px;top:692px;width:1px;height:24px;background:#d8d4d0;"></div>
<div style="left:627.2px;top:698.00px;font-size:12.3px;line-height:12.3px;color:#2a2a2a;white-space:nowrap;">MEZ</div>
<div style="left:667px;top:698.00px;font-size:12.5px;line-height:12.5px;color:#2a2a2a;white-space:nowrap;">de_DE</div>
<svg style="left:709.5px;top:700px;" width="2" height="14" viewBox="0 0 2 14"><rect x="0" y="0.0" width="2" height="2" fill="#b0a898"/><rect x="0" y="3.0" width="2" height="2" fill="#b0a898"/><rect x="0" y="6.0" width="2" height="2" fill="#b0a898"/><rect x="0" y="9.0" width="2" height="2" fill="#b0a898"/></svg>
<div style="left:357px;top:127px;width:637px;height:564px;background:#e2dfdc;"></div>
<div style="left:357px;top:127px;width:637px;height:1px;background:#c9c5c1;"></div>
<div style="left:357px;top:127px;width:1px;height:564px;background:#c9c5c1;"></div>
<div style="left:993px;top:127px;width:1px;height:564px;background:#c9c5c1;"></div>
<div style="left:358px;top:128px;width:85px;height:29px;background:#fff;"></div>
<div style="left:358px;top:158px;width:635px;height:1px;background:#c4c0bc;"></div>
<div style="left:358px;top:157px;width:85px;height:2px;background:#4a8ee8;"></div>
<svg style="left:363px;top:136px;" width="14" height="16" viewBox="0 0 14 16"><path d="M1.6 1.6H8.4L12.4 5.6V14.4H1.6Z" fill="#fff" stroke="#2a8ad4" stroke-width="1.2" stroke-linejoin="round"/><path d="M3.4 5.6h2.2M3.4 8.6h2.2M3.4 11.5h2.2" stroke="#2a8ad4" stroke-width="1"/><path d="M7 5.6h3.1M7 8.6h3.1M7 11.5h3.1" stroke="#2a8ad4" stroke-width="1.7"/></svg>
<div style="left:382.3px;top:138.00px;font-size:13px;line-height:13px;color:#222;white-space:nowrap;letter-spacing:0.2px">public</div>
<svg style="left:425px;top:139.5px;" width="12" height="11" viewBox="0 0 12 11"><path d="M1.2 1.2L10 10M10 1.2L1.2 10" stroke="#1a1a1a" stroke-width="1.05"/></svg>
<svg style="left:938px;top:137px;" width="12" height="6" viewBox="0 0 12 6"><rect x="1.6" y="1.1" width="8.8" height="3.6" fill="#fff" stroke="#111" stroke-width="1.2"/></svg>
<svg style="left:965px;top:137px;" width="12" height="12" viewBox="0 0 12 12"><rect x="1.1" y="1.1" width="9.8" height="9.4" fill="none" stroke="#111" stroke-width="1.3"/><path d="M1 3.4h10" stroke="#111" stroke-width="1"/></svg>
<svg style="left:363px;top:168.5px;" width="14" height="16" viewBox="0 0 14 16"><path d="M1.6 1.6H8.4L12.4 5.6V14.4H1.6Z" fill="#fff" stroke="#2a8ad4" stroke-width="1.2" stroke-linejoin="round"/><path d="M3.4 5.6h2.2M3.4 8.6h2.2M3.4 11.5h2.2" stroke="#2a8ad4" stroke-width="1"/><path d="M7 5.6h3.1M7 8.6h3.1M7 11.5h3.1" stroke="#2a8ad4" stroke-width="1.7"/></svg>
<div style="left:382.3px;top:171.00px;font-size:11.6px;line-height:11.6px;color:#222;white-space:nowrap;letter-spacing:0.1px">Eigenschaften</div>
<div style="left:460.5px;top:162px;width:81.5px;height:30px;background:#fff;border-radius:3px 3px 0 0;"></div>
<div style="left:460.5px;top:162px;width:81.5px;height:3px;background:#1e96dc;border-radius:3px 3px 0 0;"></div>
<div style="left:460.5px;top:165px;width:1px;height:26px;background:#c4c0bc;"></div>
<div style="left:541.5px;top:165px;width:1px;height:26px;background:#c4c0bc;"></div>
<svg style="left:463.5px;top:168.5px;" width="17" height="17" viewBox="0 0 17 17"><g fill="none" stroke="#1a88d2" stroke-width="1.15"><rect x="6.4" y=".6" width="3.6" height="5.8" fill="#9ed2f2"/><path d="M8.2 6.4V8.6M2.6 10.6V8.6H13.8V10.6M8.2 8.6V10.6"/><rect x=".6" y="10.6" width="4.2" height="5.6"/><rect x="6.1" y="10.6" width="4.2" height="5.6"/><rect x="11.6" y="10.6" width="4.2" height="5.6"/></g></svg>
<div style="left:484.5px;top:171.00px;font-size:11.6px;line-height:11.6px;color:#222;white-space:nowrap;">Diagramm</div>
<div style="left:358px;top:191px;width:102.5px;height:1px;background:#b8b4b0;"></div>
<div style="left:542px;top:191px;width:451px;height:1px;background:#b8b4b0;"></div>
<div style="left:358px;top:192px;width:609px;height:442px;background:#fff;"></div>
<div style="left:967px;top:192px;width:1px;height:442px;background:#c8c8c8;"></div>
<div style="left:968px;top:192px;width:12px;height:442px;background:#fafafa;"></div>
<div style="left:971px;top:195px;width:6px;height:196.5px;background:#a6a6a6;border-radius:3px;"></div>
<div style="left:980px;top:192px;width:1px;height:442px;background:#c8c8c8;"></div>
<div style="left:981px;top:192px;width:12px;height:442px;background:#fff;"></div>
<div style="left:981px;top:192px;width:12px;height:23px;background:#f5f5f5;"></div>
<div style="left:981px;top:215px;width:12px;height:1px;background:#d8d8d8;"></div>
<svg style="left:982px;top:198px;" width="9" height="13" viewBox="0 0 9 13"><path d="M7.5 1.5L1.5 6.5L7.5 11.5Z" fill="none" stroke="#111" stroke-width="1.3"/></svg>
<div style="left:358px;top:656px;width:635px;height:1px;background:#c4c0bc;"></div>
<div style="left:358px;top:690px;width:635px;height:1px;background:#c4c0bc;"></div>
<div style="left:820px;top:657px;width:173px;height:33px;background:#fff;"></div>
<svg style="left:363.5px;top:664.5px;" width="15" height="16" viewBox="0 0 15 16"><g transform="rotate(-48 7.5 8)"><path d="M1.8 9.2A5.8 4.6 0 0 1 10.6 3.8" fill="none" stroke="#1a88d2" stroke-width="1.7"/><path d="M9 1.2L13 4.4 8.6 6.4Z" fill="#1a88d2"/><g transform="rotate(180 7.5 8)"><path d="M1.8 9.2A5.8 4.6 0 0 1 10.6 3.8" fill="none" stroke="#1a88d2" stroke-width="1.7"/><path d="M9 1.2L13 4.4 8.6 6.4Z" fill="#1a88d2"/></g></g></svg>
<div style="left:385.1px;top:668.00px;font-size:11.8px;line-height:11.8px;color:#222;white-space:nowrap;">Aktualisieren</div>
<svg style="left:464.5px;top:665px;" width="2" height="18" viewBox="0 0 2 18"><rect x="0" y="0.0" width="2" height="2" fill="#a8a098"/><rect x="0" y="4.0" width="2" height="2" fill="#a8a098"/><rect x="0" y="8.0" width="2" height="2" fill="#a8a098"/><rect x="0" y="12.0" width="2" height="2" fill="#a8a098"/></svg>
<svg style="left:477px;top:665px;" width="17" height="17" viewBox="0 0 17 17"><rect x="1.5" y="1.5" width="14" height="14" rx="1" fill="#a8e0b0" stroke="#58c070"/><rect x="5" y="1.5" width="7" height="5" fill="#fff" stroke="#58c070"/><rect x="9" y="2.5" width="1.5" height="3" fill="#58c070"/></svg>
<div style="left:499px;top:668.00px;font-size:11.8px;line-height:11.8px;color:#9a9a9a;white-space:nowrap;letter-spacing:-0.2px">Speichern ...</div>
<svg style="left:575px;top:665px;" width="16" height="17" viewBox="0 0 16 17"><path d="M1.5 1.5h6.5l3.5 3.5v9.5h-10z" fill="#fff" stroke="#5ab4e4" stroke-width="1.1"/><path d="M3.5 6h6M3.5 8.5h6M3.5 11h4" stroke="#5ab4e4"/><path d="M10 11l4 4M14 11l-4 4" stroke="#e84a30" stroke-width="1.3"/></svg>
<div style="left:596.2px;top:667.00px;font-size:11.6px;line-height:11.6px;color:#9a9a9a;white-space:nowrap;">Zurücksetzen</div>
<svg style="left:677px;top:665px;" width="2" height="18" viewBox="0 0 2 18"><rect x="0" y="0.0" width="2" height="2" fill="#a8a098"/><rect x="0" y="4.0" width="2" height="2" fill="#a8a098"/><rect x="0" y="8.0" width="2" height="2" fill="#a8a098"/><rect x="0" y="12.0" width="2" height="2" fill="#a8a098"/></svg>
<svg style="left:702px;top:664px;" width="18" height="18" viewBox="0 0 18 18"><g fill="none" stroke="#1a8ad4" stroke-width="1.3"><path d="M1 5V1h4M13 1h4v4M17 13v4h-4M5 17H1v-4"/></g><rect x="4" y="4" width="10" height="10" fill="#1a8ad4"/><rect x="6.5" y="4" width="5" height="3.5" fill="#fff"/></svg>
<div style="left:725.2px;top:668.00px;font-size:11.8px;line-height:11.8px;color:#222;white-space:nowrap;">Layout halten</div>
<div style="left:829.5px;top:668.00px;font-size:13px;line-height:13px;color:#222;white-space:nowrap;">100%</div>
<div id="cv" style="left:358px;top:192px;width:609px;height:442px;overflow:hidden;"><svg style="left:0;top:0" width="609" height="442"><path d="M126.5 126.0 L126.5 137.3" fill="none" stroke="#3c9ad8" stroke-width="1" stroke-dasharray="none"/><path d="M161.5 126.0 L161.5 137.3" fill="none" stroke="#3c9ad8" stroke-width="1" stroke-dasharray="none"/><path d="M126.5 137.3 L239.0 293.4 L350.2 358.0 L406.4 404.5 L427.0 404.5" fill="none" stroke="#3c9ad8" stroke-width="1" stroke-dasharray="1 1"/><path d="M161.5 137.3 L222.2 171.5 L243.0 171.5" fill="none" stroke="#3c9ad8" stroke-width="1" stroke-dasharray="1 1"/><path d="M151.0 296.5 L162.9 296.5" fill="none" stroke="#3c9ad8" stroke-width="1" stroke-dasharray="none"/><path d="M162.9 296.5 L222.7 241.5 L243.0 241.5" fill="none" stroke="#3c9ad8" stroke-width="1" stroke-dasharray="1 1"/><path d="M151.0 353.5 L162.9 353.5" fill="none" stroke="#3c9ad8" stroke-width="1" stroke-dasharray="none"/><path d="M162.9 353.5 L222.1 410.5 L232.2 410.5" fill="none" stroke="#3c9ad8" stroke-width="1" stroke-dasharray="1 1"/><path d="M355.0 440.5 L427.0 440.5" fill="none" stroke="#3c9ad8" stroke-width="1" stroke-dasharray="none"/><path d="M556.2 420.5 L565.4 420.5" fill="none" stroke="#3c9ad8" stroke-width="1" stroke-dasharray="none"/><path d="M565.4 420.5 L574.6 410.7 L604.5 425.6" fill="none" stroke="#3c9ad8" stroke-width="1" stroke-dasharray="1 1"/><path d="M604.5 425.6 L604.5 448.0" fill="none" stroke="#3c9ad8" stroke-width="1" stroke-dasharray="none"/></svg>
<div style="left:40px;top:40px;width:124px;height:77px;background:#fff;box-sizing:border-box;border:2px solid #1486cc;"></div>
<div style="left:42px;top:42px;width:120px;height:23px;background:#1f96d6;"></div>
<svg style="left:45.13937499999997px;top:48px" width="14" height="11" viewBox="0 0 14 11"><rect x="0.5" y="0.5" width="13" height="10" fill="none" stroke="#3a7ec0" stroke-width="1" opacity=".4"/><path d="M0.5 4h13M7 4v6.5" stroke="#3a7ec0" opacity=".4"/></svg>
<div style="left:64.13937499999997px;top:48.00px;font-size:12px;line-height:12px;color:#ffffff;white-space:nowrap;">sponsorenkontakt</div>
<div style="left:42px;top:68.60000000000002px;width:120px;height:1.5px;background:#1486cc;"></div>
<svg style="left:46px;top:75.39999999999998px" width="14" height="14" viewBox="0 0 14 14"><rect x="0.5" y="0.5" width="13" height="13" fill="none" stroke="#2a8ad4" stroke-width="1.1"/><circle cx="5" cy="4.9" r="1.7" fill="none" stroke="#2a8ad4" stroke-width="1.1"/><path d="M2.2 10.8c.2-1.6 1.3-2.6 2.8-2.6s2.6 1 2.8 2.6z" fill="#2a8ad4"/><path d="M8.2 4.6h3.6M8.2 6.6h3.6" stroke="#2a8ad4" stroke-width="1.1"/></svg>
<div style="left:64px;top:77.00px;font-size:12px;line-height:12px;color:#222;white-space:nowrap;">persid</div>
<svg style="left:46px;top:96.39999999999998px" width="14" height="14" viewBox="0 0 14 14"><rect x="0.5" y="0.5" width="13" height="13" fill="none" stroke="#2a8ad4" stroke-width="1.1"/><circle cx="5" cy="4.9" r="1.7" fill="none" stroke="#2a8ad4" stroke-width="1.1"/><path d="M2.2 10.8c.2-1.6 1.3-2.6 2.8-2.6s2.6 1 2.8 2.6z" fill="#2a8ad4"/><path d="M8.2 4.6h3.6M8.2 6.6h3.6" stroke="#2a8ad4" stroke-width="1.1"/></svg>
<div style="left:64px;top:98.00px;font-size:12px;line-height:12px;color:#222;white-space:nowrap;">sponid</div>
<div style="left:243px;top:129px;width:114px;height:161px;background:#fff;box-sizing:border-box;border:2px solid #1486cc;"></div>
<div style="left:245px;top:131px;width:110px;height:23px;background:#1f96d6;"></div>
<svg style="left:269.15593750000005px;top:137px" width="14" height="11" viewBox="0 0 14 11"><rect x="0.5" y="0.5" width="13" height="10" fill="none" stroke="#3a7ec0" stroke-width="1" opacity=".4"/><path d="M0.5 4h13M7 4v6.5" stroke="#3a7ec0" opacity=".4"/></svg>
<div style="left:288.15593750000005px;top:137.00px;font-size:12px;line-height:12px;color:#ffffff;white-space:nowrap;">sponsor</div>
<svg style="left:249px;top:160px" width="14" height="14" viewBox="0 0 14 14"><rect x="0.5" y="0.5" width="13" height="13" fill="none" stroke="#2a8ad4" stroke-width="1.1"/><circle cx="5" cy="4.9" r="1.7" fill="none" stroke="#2a8ad4" stroke-width="1.1"/><path d="M2.2 10.8c.2-1.6 1.3-2.6 2.8-2.6s2.6 1 2.8 2.6z" fill="#2a8ad4"/><path d="M8.2 4.6h3.6M8.2 6.6h3.6" stroke="#2a8ad4" stroke-width="1.1"/></svg>
<div style="left:267px;top:162.00px;font-size:12px;line-height:12px;color:#222;white-space:nowrap;font-weight:bold;">sponid</div>
<div style="left:245px;top:178.60000000000002px;width:110px;height:1.5px;background:#1486cc;"></div>
<svg style="left:249px;top:188.10000000000002px" width="15" height="8" viewBox="0 0 15 8"><path d="M.9 7.8L2.9 .8H4.2L6.2 7.8" fill="none" stroke="#2a88d2" stroke-width="1.4" stroke-linejoin="bevel"/><path d="M2 5.2H5.1" stroke="#2a88d2" stroke-width="1.2"/><rect x="6.9" y="3.6" width="2.2" height="1.2" fill="#2a88d2"/><path d="M9.5 1.2h4.6L9.6 7.05h4.8" fill="none" stroke="#2a88d2" stroke-width="1.3"/></svg>
<div style="left:267px;top:187.00px;font-size:12px;line-height:12px;color:#222;white-space:nowrap;">name</div>
<svg style="left:249px;top:209.10000000000002px" width="15" height="8" viewBox="0 0 15 8"><path d="M.9 7.8L2.9 .8H4.2L6.2 7.8" fill="none" stroke="#2a88d2" stroke-width="1.4" stroke-linejoin="bevel"/><path d="M2 5.2H5.1" stroke="#2a88d2" stroke-width="1.2"/><rect x="6.9" y="3.6" width="2.2" height="1.2" fill="#2a88d2"/><path d="M9.5 1.2h4.6L9.6 7.05h4.8" fill="none" stroke="#2a88d2" stroke-width="1.3"/></svg>
<div style="left:267px;top:208.00px;font-size:12px;line-height:12px;color:#222;white-space:nowrap;letter-spacing:-0.55px">strasse_nr</div>
<svg style="left:249px;top:230.10000000000002px" width="15" height="8" viewBox="0 0 15 8"><path d="M.9 7.8L2.9 .8H4.2L6.2 7.8" fill="none" stroke="#2a88d2" stroke-width="1.4" stroke-linejoin="bevel"/><path d="M2 5.2H5.1" stroke="#2a88d2" stroke-width="1.2"/><rect x="6.9" y="3.6" width="2.2" height="1.2" fill="#2a88d2"/><path d="M9.5 1.2h4.6L9.6 7.05h4.8" fill="none" stroke="#2a88d2" stroke-width="1.3"/></svg>
<div style="left:267px;top:229.00px;font-size:12px;line-height:12px;color:#222;white-space:nowrap;">plz</div>
<svg style="left:249px;top:251.10000000000002px" width="15" height="8" viewBox="0 0 15 8"><path d="M.9 7.8L2.9 .8H4.2L6.2 7.8" fill="none" stroke="#2a88d2" stroke-width="1.4" stroke-linejoin="bevel"/><path d="M2 5.2H5.1" stroke="#2a88d2" stroke-width="1.2"/><rect x="6.9" y="3.6" width="2.2" height="1.2" fill="#2a88d2"/><path d="M9.5 1.2h4.6L9.6 7.05h4.8" fill="none" stroke="#2a88d2" stroke-width="1.3"/></svg>
<div style="left:267px;top:250.00px;font-size:12px;line-height:12px;color:#222;white-space:nowrap;">ort</div>
<svg style="left:247.79999999999995px;top:271.4px" width="16" height="9" viewBox="0 0 16 9"><g fill="none" stroke="#2a8ad4" stroke-width="1.15"><path d="M0.6 2.2L2.4 0.9V8M0.8 8h3.3"/><path d="M5.2 2.2c.4-1 1.3-1.4 2-1.4 1.1 0 2 .7 2 1.9 0 1.6-2.6 3.2-3.9 5.3h4.2"/><path d="M10.6 1.5c.5-.5 1.1-.7 1.9-.7 1.1 0 1.9.6 1.9 1.8 0 1-1 1.6-2.2 1.6 1.4 0 2.4.6 2.4 1.9 0 1.3-1 2-2.2 2-.8 0-1.5-.3-2-.8"/></g></svg>
<div style="left:267px;top:271.00px;font-size:12px;line-height:12px;color:#222;white-space:nowrap;">spendentotal</div>
<div style="left:40px;top:244px;width:102px;height:161px;background:#fff;box-sizing:border-box;border:2px solid #1486cc;"></div>
<div style="left:42px;top:246px;width:98px;height:23px;background:#1f96d6;"></div>
<svg style="left:61.81718749999999px;top:252px" width="14" height="11" viewBox="0 0 14 11"><rect x="0.5" y="0.5" width="13" height="10" fill="none" stroke="#3a7ec0" stroke-width="1" opacity=".4"/><path d="M0.5 4h13M7 4v6.5" stroke="#3a7ec0" opacity=".4"/></svg>
<div style="left:80.81718749999999px;top:252.00px;font-size:12px;line-height:12px;color:#ffffff;white-space:nowrap;">spende</div>
<svg style="left:46px;top:275px" width="14" height="14" viewBox="0 0 14 14"><rect x="0.5" y="0.5" width="13" height="13" fill="none" stroke="#2a8ad4" stroke-width="1.1"/><circle cx="5" cy="4.9" r="1.7" fill="none" stroke="#2a8ad4" stroke-width="1.1"/><path d="M2.2 10.8c.2-1.6 1.3-2.6 2.8-2.6s2.6 1 2.8 2.6z" fill="#2a8ad4"/><path d="M8.2 4.6h3.6M8.2 6.6h3.6" stroke="#2a8ad4" stroke-width="1.1"/></svg>
<div style="left:64px;top:277.00px;font-size:12px;line-height:12px;color:#222;white-space:nowrap;font-weight:bold;">spenid</div>
<div style="left:42px;top:293.6px;width:98px;height:1.5px;background:#1486cc;"></div>
<svg style="left:46px;top:303.1px" width="15" height="8" viewBox="0 0 15 8"><path d="M.9 7.8L2.9 .8H4.2L6.2 7.8" fill="none" stroke="#2a88d2" stroke-width="1.4" stroke-linejoin="bevel"/><path d="M2 5.2H5.1" stroke="#2a88d2" stroke-width="1.2"/><rect x="6.9" y="3.6" width="2.2" height="1.2" fill="#2a88d2"/><path d="M9.5 1.2h4.6L9.6 7.05h4.8" fill="none" stroke="#2a88d2" stroke-width="1.3"/></svg>
<div style="left:64px;top:302.00px;font-size:12px;line-height:12px;color:#222;white-space:nowrap;">bezeichner</div>
<svg style="left:46px;top:321.4px" width="14" height="14" viewBox="0 0 14 14"><circle cx="7" cy="7" r="6.2" fill="none" stroke="#2a8ad4" stroke-width="1.2"/><path d="M7 3.2v4L3.8 10.3" stroke="#2a8ad4" stroke-width="1.2" fill="none"/></svg>
<div style="left:64px;top:323.00px;font-size:12px;line-height:12px;color:#222;white-space:nowrap;">datum</div>
<svg style="left:44.80000000000001px;top:344.4px" width="16" height="9" viewBox="0 0 16 9"><g fill="none" stroke="#2a8ad4" stroke-width="1.15"><path d="M0.6 2.2L2.4 0.9V8M0.8 8h3.3"/><path d="M5.2 2.2c.4-1 1.3-1.4 2-1.4 1.1 0 2 .7 2 1.9 0 1.6-2.6 3.2-3.9 5.3h4.2"/><path d="M10.6 1.5c.5-.5 1.1-.7 1.9-.7 1.1 0 1.9.6 1.9 1.8 0 1-1 1.6-2.2 1.6 1.4 0 2.4.6 2.4 1.9 0 1.3-1 2-2.2 2-.8 0-1.5-.3-2-.8"/></g></svg>
<div style="left:64px;top:344.00px;font-size:12px;line-height:12px;color:#222;white-space:nowrap;">betrag</div>
<svg style="left:46px;top:363.4px" width="14" height="14" viewBox="0 0 14 14"><rect x="0.5" y="0.5" width="13" height="13" fill="none" stroke="#2a8ad4" stroke-width="1.1"/><circle cx="5" cy="4.9" r="1.7" fill="none" stroke="#2a8ad4" stroke-width="1.1"/><path d="M2.2 10.8c.2-1.6 1.3-2.6 2.8-2.6s2.6 1 2.8 2.6z" fill="#2a8ad4"/><path d="M8.2 4.6h3.6M8.2 6.6h3.6" stroke="#2a8ad4" stroke-width="1.1"/></svg>
<div style="left:64px;top:365.00px;font-size:12px;line-height:12px;color:#222;white-space:nowrap;">sponid</div>
<svg style="left:46px;top:384.4px" width="14" height="14" viewBox="0 0 14 14"><rect x="0.5" y="0.5" width="13" height="13" fill="none" stroke="#2a8ad4" stroke-width="1.1"/><circle cx="5" cy="4.9" r="1.7" fill="none" stroke="#2a8ad4" stroke-width="1.1"/><path d="M2.2 10.8c.2-1.6 1.3-2.6 2.8-2.6s2.6 1 2.8 2.6z" fill="#2a8ad4"/><path d="M8.2 4.6h3.6M8.2 6.6h3.6" stroke="#2a8ad4" stroke-width="1.1"/></svg>
<div style="left:64px;top:386.00px;font-size:12px;line-height:12px;color:#222;white-space:nowrap;">anlaid</div>
<div style="left:243px;top:360px;width:101px;height:120px;background:#fff;box-sizing:border-box;border:2px solid #1486cc;"></div>
<div style="left:245px;top:362px;width:97px;height:23px;background:#1f96d6;"></div>
<svg style="left:266.65718749999996px;top:368px" width="14" height="11" viewBox="0 0 14 11"><rect x="0.5" y="0.5" width="13" height="10" fill="none" stroke="#3a7ec0" stroke-width="1" opacity=".4"/><path d="M0.5 4h13M7 4v6.5" stroke="#3a7ec0" opacity=".4"/></svg>
<div style="left:285.65718749999996px;top:368.00px;font-size:12px;line-height:12px;color:#ffffff;white-space:nowrap;">anlass</div>
<svg style="left:249px;top:391px" width="14" height="14" viewBox="0 0 14 14"><rect x="0.5" y="0.5" width="13" height="13" fill="none" stroke="#2a8ad4" stroke-width="1.1"/><circle cx="5" cy="4.9" r="1.7" fill="none" stroke="#2a8ad4" stroke-width="1.1"/><path d="M2.2 10.8c.2-1.6 1.3-2.6 2.8-2.6s2.6 1 2.8 2.6z" fill="#2a8ad4"/><path d="M8.2 4.6h3.6M8.2 6.6h3.6" stroke="#2a8ad4" stroke-width="1.1"/></svg>
<div style="left:267px;top:393.00px;font-size:12px;line-height:12px;color:#222;white-space:nowrap;font-weight:bold;">anlaid</div>
<div style="left:245px;top:409.6px;width:97px;height:1.5px;background:#1486cc;"></div>
<svg style="left:249px;top:419.1px" width="15" height="8" viewBox="0 0 15 8"><path d="M.9 7.8L2.9 .8H4.2L6.2 7.8" fill="none" stroke="#2a88d2" stroke-width="1.4" stroke-linejoin="bevel"/><path d="M2 5.2H5.1" stroke="#2a88d2" stroke-width="1.2"/><rect x="6.9" y="3.6" width="2.2" height="1.2" fill="#2a88d2"/><path d="M9.5 1.2h4.6L9.6 7.05h4.8" fill="none" stroke="#2a88d2" stroke-width="1.3"/></svg>
<div style="left:267px;top:418.00px;font-size:12px;line-height:12px;color:#222;white-space:nowrap;">bezeichner</div>
<svg style="left:249px;top:440.1px" width="15" height="8" viewBox="0 0 15 8"><path d="M.9 7.8L2.9 .8H4.2L6.2 7.8" fill="none" stroke="#2a88d2" stroke-width="1.4" stroke-linejoin="bevel"/><path d="M2 5.2H5.1" stroke="#2a88d2" stroke-width="1.2"/><rect x="6.9" y="3.6" width="2.2" height="1.2" fill="#2a88d2"/><path d="M9.5 1.2h4.6L9.6 7.05h4.8" fill="none" stroke="#2a88d2" stroke-width="1.3"/></svg>
<div style="left:267px;top:439.00px;font-size:12px;line-height:12px;color:#222;white-space:nowrap;">ort</div>
<div style="left:427px;top:297px;width:118px;height:200px;background:#fff;box-sizing:border-box;border:2px solid #1486cc;"></div>
<div style="left:429px;top:299px;width:114px;height:23px;background:#1f96d6;"></div>
<svg style="left:458.15593750000005px;top:305px" width="14" height="11" viewBox="0 0 14 11"><rect x="0.5" y="0.5" width="13" height="10" fill="none" stroke="#3a7ec0" stroke-width="1" opacity=".4"/><path d="M0.5 4h13M7 4v6.5" stroke="#3a7ec0" opacity=".4"/></svg>
<div style="left:477.15593750000005px;top:305.00px;font-size:12px;line-height:12px;color:#ffffff;white-space:nowrap;">person</div>
<svg style="left:433px;top:328px" width="14" height="14" viewBox="0 0 14 14"><rect x="0.5" y="0.5" width="13" height="13" fill="none" stroke="#2a8ad4" stroke-width="1.1"/><circle cx="5" cy="4.9" r="1.7" fill="none" stroke="#2a8ad4" stroke-width="1.1"/><path d="M2.2 10.8c.2-1.6 1.3-2.6 2.8-2.6s2.6 1 2.8 2.6z" fill="#2a8ad4"/><path d="M8.2 4.6h3.6M8.2 6.6h3.6" stroke="#2a8ad4" stroke-width="1.1"/></svg>
<div style="left:451px;top:330.00px;font-size:12px;line-height:12px;color:#222;white-space:nowrap;font-weight:bold;">persid</div>
<div style="left:429px;top:346.6px;width:114px;height:1.5px;background:#1486cc;"></div>
<svg style="left:433px;top:356.1px" width="15" height="8" viewBox="0 0 15 8"><path d="M.9 7.8L2.9 .8H4.2L6.2 7.8" fill="none" stroke="#2a88d2" stroke-width="1.4" stroke-linejoin="bevel"/><path d="M2 5.2H5.1" stroke="#2a88d2" stroke-width="1.2"/><rect x="6.9" y="3.6" width="2.2" height="1.2" fill="#2a88d2"/><path d="M9.5 1.2h4.6L9.6 7.05h4.8" fill="none" stroke="#2a88d2" stroke-width="1.3"/></svg>
<div style="left:451px;top:355.00px;font-size:12px;line-height:12px;color:#222;white-space:nowrap;">name</div>
<svg style="left:433px;top:377.1px" width="15" height="8" viewBox="0 0 15 8"><path d="M.9 7.8L2.9 .8H4.2L6.2 7.8" fill="none" stroke="#2a88d2" stroke-width="1.4" stroke-linejoin="bevel"/><path d="M2 5.2H5.1" stroke="#2a88d2" stroke-width="1.2"/><rect x="6.9" y="3.6" width="2.2" height="1.2" fill="#2a88d2"/><path d="M9.5 1.2h4.6L9.6 7.05h4.8" fill="none" stroke="#2a88d2" stroke-width="1.3"/></svg>
<div style="left:451px;top:376.00px;font-size:12px;line-height:12px;color:#222;white-space:nowrap;">vorname</div>
<svg style="left:433px;top:398.1px" width="15" height="8" viewBox="0 0 15 8"><path d="M.9 7.8L2.9 .8H4.2L6.2 7.8" fill="none" stroke="#2a88d2" stroke-width="1.4" stroke-linejoin="bevel"/><path d="M2 5.2H5.1" stroke="#2a88d2" stroke-width="1.2"/><rect x="6.9" y="3.6" width="2.2" height="1.2" fill="#2a88d2"/><path d="M9.5 1.2h4.6L9.6 7.05h4.8" fill="none" stroke="#2a88d2" stroke-width="1.3"/></svg>
<div style="left:451px;top:397.00px;font-size:12px;line-height:12px;color:#222;white-space:nowrap;letter-spacing:-0.55px">strasse_nr</div>
<svg style="left:433px;top:419.1px" width="15" height="8" viewBox="0 0 15 8"><path d="M.9 7.8L2.9 .8H4.2L6.2 7.8" fill="none" stroke="#2a88d2" stroke-width="1.4" stroke-linejoin="bevel"/><path d="M2 5.2H5.1" stroke="#2a88d2" stroke-width="1.2"/><rect x="6.9" y="3.6" width="2.2" height="1.2" fill="#2a88d2"/><path d="M9.5 1.2h4.6L9.6 7.05h4.8" fill="none" stroke="#2a88d2" stroke-width="1.3"/></svg>
<div style="left:451px;top:418.00px;font-size:12px;line-height:12px;color:#222;white-space:nowrap;">plz</div>
<svg style="left:433px;top:440.1px" width="15" height="8" viewBox="0 0 15 8"><path d="M.9 7.8L2.9 .8H4.2L6.2 7.8" fill="none" stroke="#2a88d2" stroke-width="1.4" stroke-linejoin="bevel"/><path d="M2 5.2H5.1" stroke="#2a88d2" stroke-width="1.2"/><rect x="6.9" y="3.6" width="2.2" height="1.2" fill="#2a88d2"/><path d="M9.5 1.2h4.6L9.6 7.05h4.8" fill="none" stroke="#2a88d2" stroke-width="1.3"/></svg>
<div style="left:451px;top:439.00px;font-size:12px;line-height:12px;color:#222;white-space:nowrap;">ort</div>
<svg style="left:0;top:0" width="609" height="442"><circle cx="126.60000000000002" cy="121.69999999999999" r="4.6" fill="#7a7a7a" stroke="#2a90d4" stroke-width="1.2"/><circle cx="161.5" cy="121.69999999999999" r="4.6" fill="#7a7a7a" stroke="#2a90d4" stroke-width="1.2"/><circle cx="146.89999999999998" cy="296.5" r="4.6" fill="#7a7a7a" stroke="#2a90d4" stroke-width="1.2"/><circle cx="146.89999999999998" cy="353.70000000000005" r="4.6" fill="#7a7a7a" stroke="#2a90d4" stroke-width="1.2"/><circle cx="350" cy="440.29999999999995" r="4.6" fill="#7a7a7a" stroke="#2a90d4" stroke-width="1.2"/><path d="M232.20000000000005 410.5L237.70000000000005 405.0L243.20000000000005 410.5L237.70000000000005 416.0Z" fill="#fff" stroke="#2a8ad4" stroke-width="1.3"/><path d="M545.0 420.6L550.5 415.1L556.0 420.6L550.5 426.1Z" fill="#fff" stroke="#2a8ad4" stroke-width="1.3"/></svg></div>
<!--DIAGRAM-->
</body></html>
